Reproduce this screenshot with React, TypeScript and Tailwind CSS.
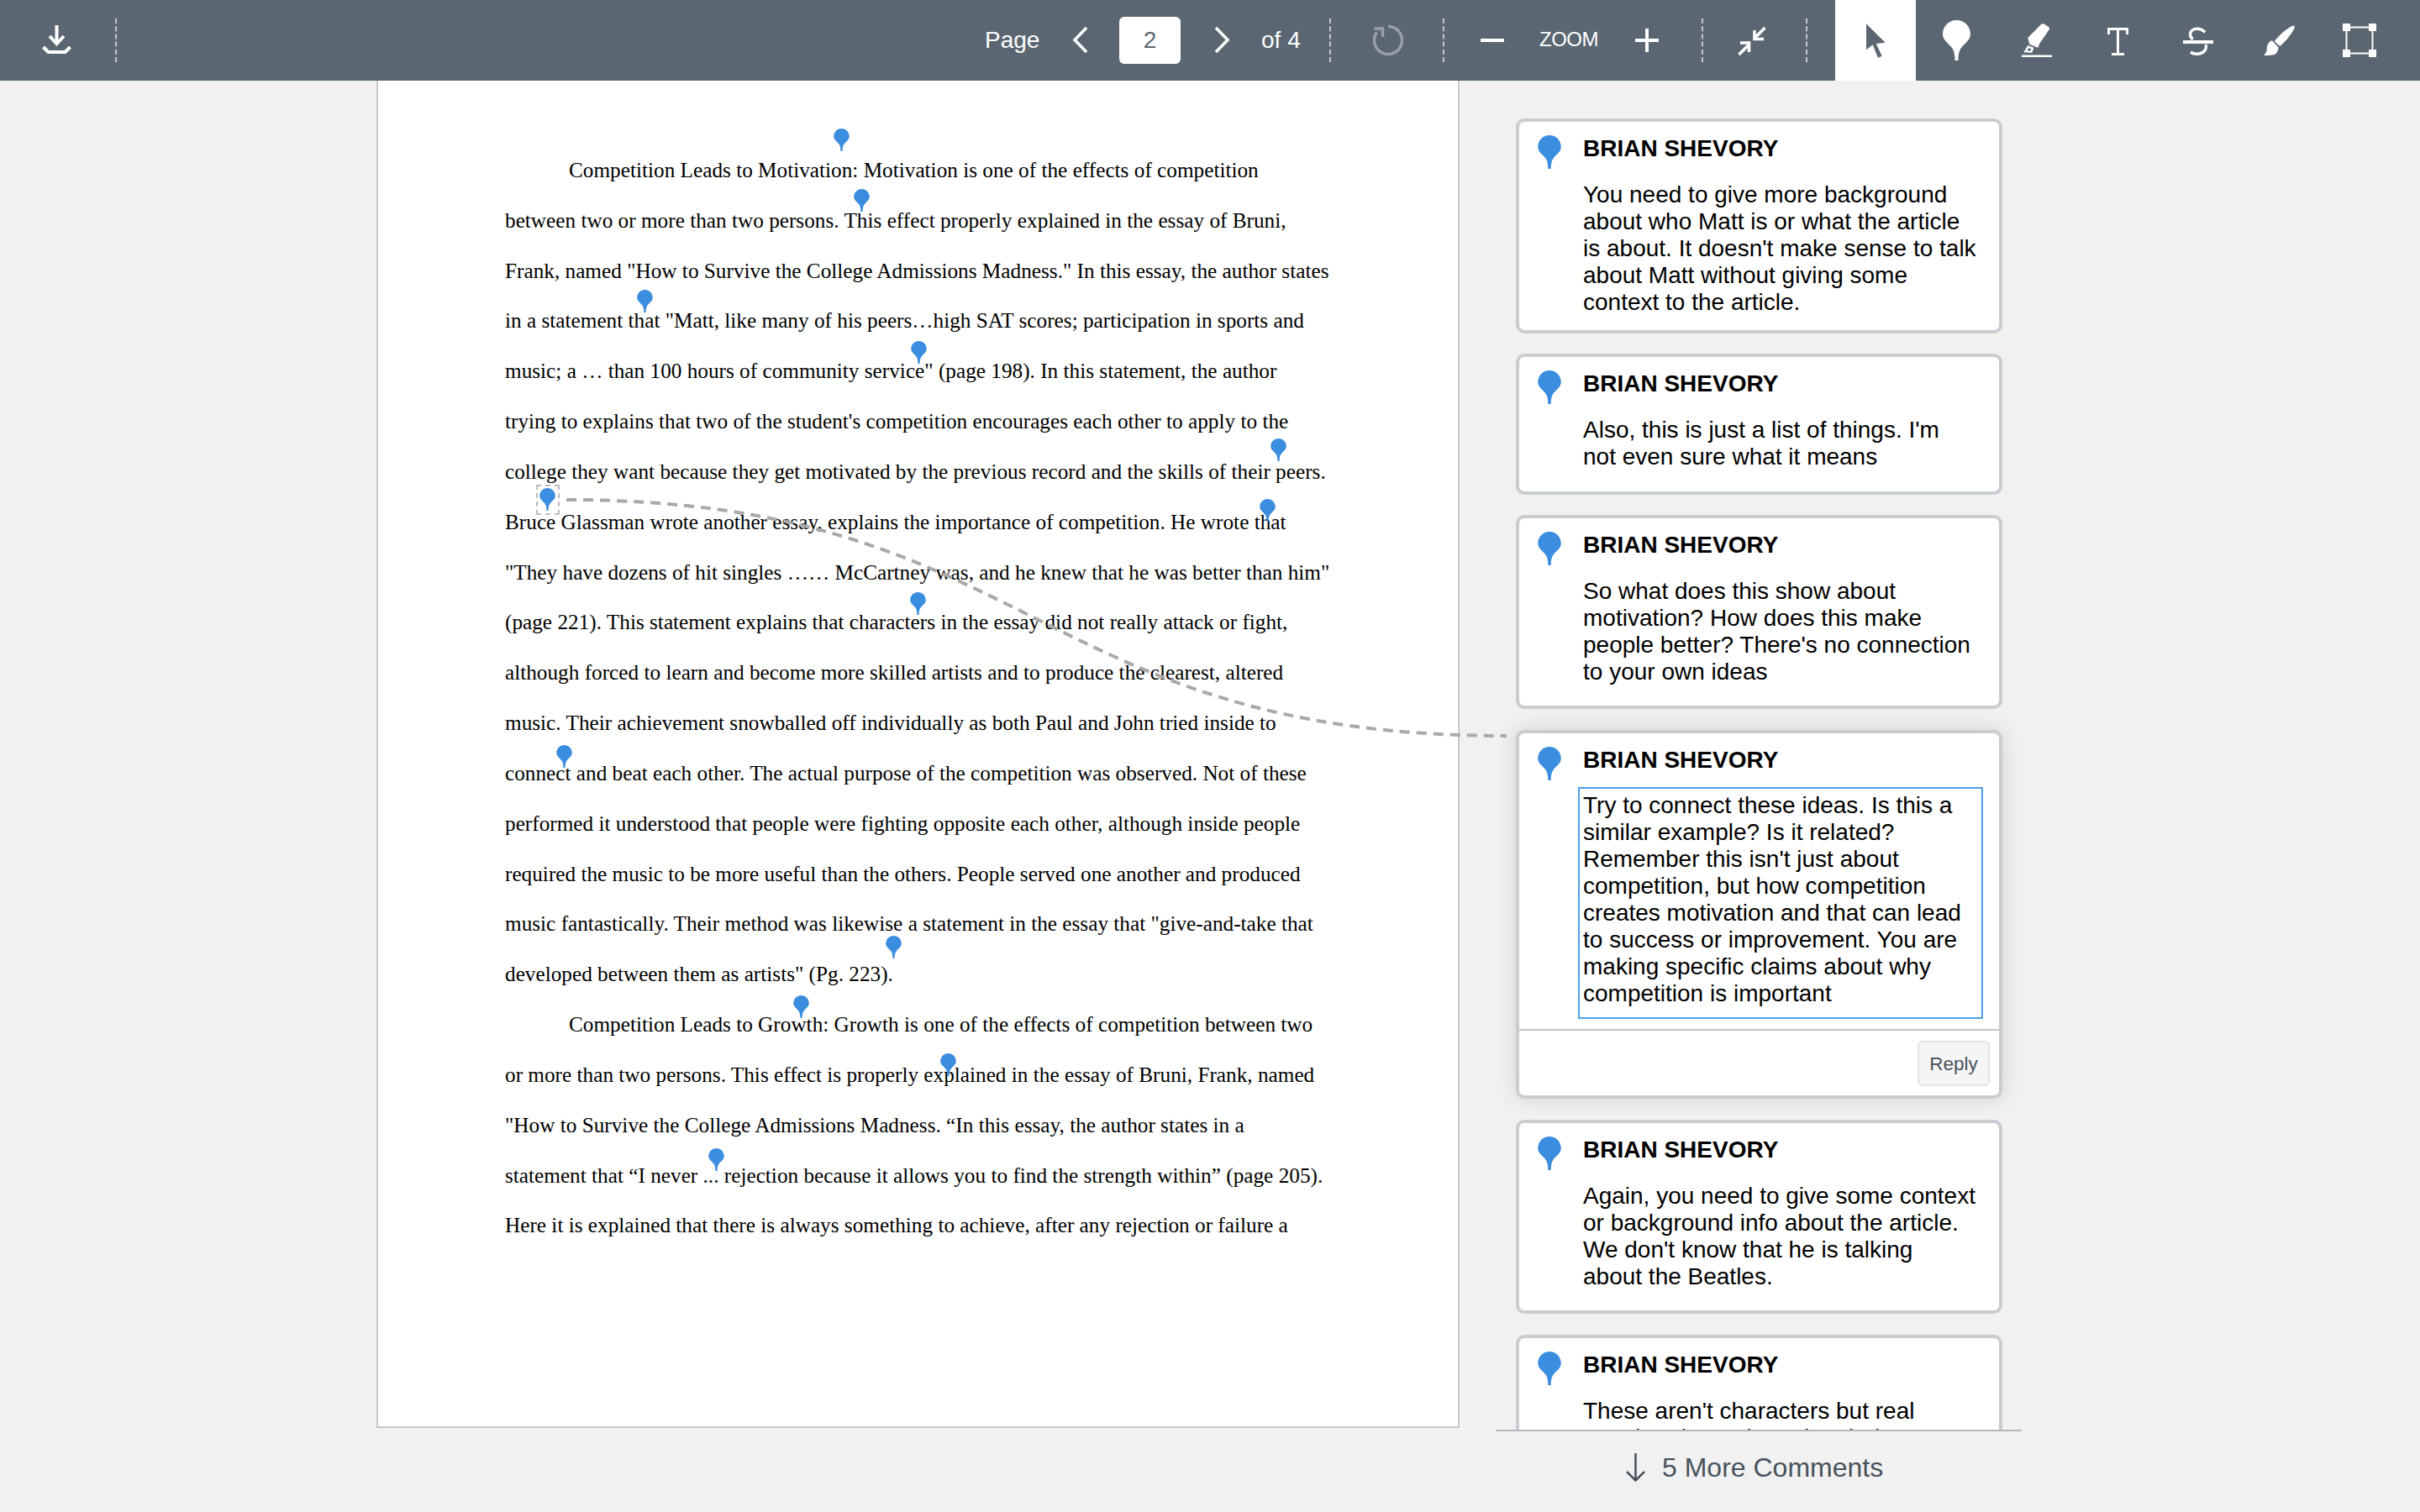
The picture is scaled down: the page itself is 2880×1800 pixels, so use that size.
const paperLines: { text: string; indent?: boolean }[] = [
  { text: 'Competition Leads to Motivation: Motivation is one of the effects of competition', indent: true },
  { text: 'between two or more than two persons. This effect properly explained in the essay of Bruni,' },
  { text: 'Frank, named "How to Survive the College Admissions Madness." In this essay, the author states' },
  { text: 'in a statement that "Matt, like many of his peers…high SAT scores; participation in sports and' },
  { text: 'music; a … than 100 hours of community service" (page 198). In this statement, the author' },
  { text: "trying to explains that two of the student's competition encourages each other to apply to the" },
  { text: 'college they want because they get motivated by the previous record and the skills of their peers.' },
  { text: 'Bruce Glassman wrote another essay, explains the importance of competition. He wrote that' },
  { text: '"They have dozens of hit singles …… McCartney was, and he knew that he was better than him"' },
  { text: '(page 221). This statement explains that characters in the essay did not really attack or fight,' },
  { text: 'although forced to learn and become more skilled artists and to produce the clearest, altered' },
  { text: 'music. Their achievement snowballed off individually as both Paul and John tried inside to' },
  { text: 'connect and beat each other. The actual purpose of the competition was observed. Not of these' },
  { text: 'performed it understood that people were fighting opposite each other, although inside people' },
  { text: 'required the music to be more useful than the others. People served one another and produced' },
  { text: 'music fantastically. Their method was likewise a statement in the essay that "give-and-take that' },
  { text: 'developed between them as artists" (Pg. 223).' },
  { text: 'Competition Leads to Growth: Growth is one of the effects of competition between two', indent: true },
  { text: 'or more than two persons. This effect is properly explained in the essay of Bruni, Frank, named' },
  { text: '"How to Survive the College Admissions Madness. “In this essay, the author states in a' },
  { text: 'statement that “I never ... rejection because it allows you to find the strength within” (page 205).' },
  { text: 'Here it is explained that there is always something to achieve, after any rejection or failure a' },
];

const pinSpots = [
  'left-[542px] top-[57px]',
  'left-[566px] top-[129px]',
  'left-[308px] top-[249px]',
  'left-[634px] top-[310px]',
  'left-[1062px] top-[426px]',
  'left-[192px] top-[485px]',
  'left-[1049px] top-[498px]',
  'left-[633px] top-[609px]',
  'left-[212px] top-[791px]',
  'left-[604px] top-[1018px]',
  'left-[494px] top-[1089px]',
  'left-[669px] top-[1158px]',
  'left-[393px] top-[1271px]',
];

const comments = [
  {
    lines: [
      'You need to give more background',
      'about who Matt is or what the article',
      "is about. It doesn't make sense to talk",
      'about Matt without giving some',
      'context to the article.',
    ],
    pad: 'pb-[17px]',
  },
  {
    lines: ["Also, this is just a list of things. I'm", 'not even sure what it means'],
    pad: 'pb-[25px]',
  },
  {
    lines: [
      'So what does this show about',
      'motivation? How does this make',
      "people better? There's no connection",
      'to your own ideas',
    ],
    pad: 'pb-[24px]',
  },
];

const activeLines = [
  'Try to connect these ideas. Is this a',
  'similar example? Is it related?',
  "Remember this isn't just about",
  'competition, but how competition',
  'creates motivation and that can lead',
  'to success or improvement. You are',
  'making specific claims about why',
  'competition is important',
];

const afterActive = [
  'Again, you need to give some context',
  'or background info about the article.',
  "We don't know that he is talking",
  'about the Beatles.',
];

function Pin({ className }: { className: string }) {
  return (
    <svg viewBox="0 0 33 48" className={className} fill="currentColor">
      <path d="M16.5 0C25.6 0 33 7.4 33 16.5C33 24 26 27.5 22 33C19.5 36.5 18.5 41 18.5 48L14.5 48C14.5 41 13.5 36.5 11 33C7 27.5 0 24 0 16.5C0 7.4 7.4 0 16.5 0Z" />
    </svg>
  );
}

function Sep({ className }: { className: string }) {
  return <div className={`h-[52px] w-[2px] self-center border-l-2 border-dashed border-[#c3c8cd] ${className}`} />;
}

function CardHead() {
  return (
    <div className="flex h-[32px]">
      <Pin className="ml-[22px] h-[40px] w-[28px] shrink-0 text-[#3b8ddf]" />
      <div className="ml-[26px] text-[28px] font-bold leading-[32px] text-black">BRIAN SHEVORY</div>
    </div>
  );
}

function Body({ lines }: { lines: string[] }) {
  return (
    <div className="text-[28px] leading-[32px] text-black">
      {lines.map((l) => (
        <div key={l} className="whitespace-nowrap">
          {l}
        </div>
      ))}
    </div>
  );
}

function Card({ lines, pad }: { lines: string[]; pad: string }) {
  return (
    <div className={`shrink-0 rounded-[10px] border-4 border-[#c8cdd2] bg-white pt-[16px] ${pad}`}>
      <CardHead />
      <div className="ml-[76px] mt-[23px]">
        <Body lines={lines} />
      </div>
    </div>
  );
}

export default function App() {
  return (
    <div className="relative h-[1800px] w-[2880px] overflow-hidden bg-[#f1f1f1] font-['Liberation_Sans',Arial,sans-serif]">
      <header className="flex h-[96px] items-stretch bg-[#5a6672] text-white">
        <svg width="35" height="96" className="ml-[50px]" fill="none" stroke="currentColor" strokeWidth="4">
          <path d="M17.5 30V53" />
          <path d="M9 43L17.5 52L26 43" />
          <path d="M1.5 56L7.5 62H27.5L33.5 56" />
        </svg>
        <Sep className="ml-[52px]" />
        <div className="ml-[1033px] w-[65px] self-center whitespace-nowrap text-[28px] leading-[32px]">Page</div>
        <svg width="19" height="96" className="ml-[39px]" fill="none" stroke="currentColor" strokeWidth="3.5">
          <path d="M17 33L3 47.5L17 62" />
        </svg>
        <div className="ml-[37px] flex h-[56px] w-[73px] items-center justify-center self-center rounded-[6px] bg-white text-[28px] text-[#5a6672]">
          2
        </div>
        <svg width="18" height="96" className="ml-[40px]" fill="none" stroke="currentColor" strokeWidth="3.5">
          <path d="M2 33L16 47.5L2 62" />
        </svg>
        <div className="ml-[38px] w-[46px] self-center whitespace-nowrap text-[28px] leading-[32px]">of 4</div>
        <Sep className="ml-[35px]" />
        <svg width="36" height="96" className="ml-[50px]" fill="none" stroke="#98a0a7" strokeWidth="3.5">
          <path d="M18 31.5A16.5 16.5 0 1 1 4.5 38.5" />
          <path d="M1.5 34H11.5V44" />
        </svg>
        <Sep className="ml-[47px]" />
        <svg width="28" height="96" className="ml-[43px]" fill="none" stroke="currentColor" strokeWidth="4">
          <path d="M0 48H28" />
        </svg>
        <div className="ml-[42px] w-[71px] self-center whitespace-nowrap pb-[3px] text-[24px] leading-[28px] tracking-[-0.5px]">
          ZOOM
        </div>
        <svg width="28" height="96" className="ml-[43px]" fill="none" stroke="currentColor" strokeWidth="4">
          <path d="M0 48H28M14 34V62" />
        </svg>
        <Sep className="ml-[51px]" />
        <svg width="34" height="96" className="ml-[41px]" fill="none" stroke="currentColor" strokeWidth="3.5">
          <path d="M32.5 33L20 45.5" />
          <path d="M20 36V46.5H31" />
          <path d="M1.5 65L13.5 53" />
          <path d="M3 51H13.5V62" />
        </svg>
        <Sep className="ml-[47px]" />
        <div className="ml-[33px] flex w-[96px] justify-center bg-white text-[#5a6672]">
          <svg width="23" height="96" fill="currentColor">
            <path d="M0 28.3L22.7 50.7L11.7 52L18.7 66.7L14 68.7L7.7 53.3L0 59.3Z" />
          </svg>
        </div>
        <Pin className="ml-[32px] mt-[24px] h-[48px] w-[33px]" />
        <svg width="36" height="96" className="ml-[61px]" fill="currentColor">
          <path d="M23.3 28.7C24.5 28 25.5 28 26.5 28.5L31.7 31.8C33 32.7 33.2 34 32.7 35.2L21.5 51.5L19.3 56.7L9.3 52.7L7.3 45Z" />
          <path
            fillRule="evenodd"
            d="M7.3 54L14.5 56.7L12.3 62.7L2.3 62.2ZM8.3 57.2L6 60.2L10.6 60.4L11.3 58.3Z"
          />
          <rect x="0" y="65.5" width="36" height="2.5" />
        </svg>
        <svg width="25" height="96" className="ml-[66px]" fill="none" stroke="currentColor" strokeWidth="3">
          <path d="M1.5 41V34.5H23.5V41" />
          <path d="M12.5 34.5V65" />
          <path d="M5 64.5H20" />
        </svg>
        <svg width="36" height="96" className="ml-[65px]" fill="none" stroke="currentColor" strokeWidth="3.5">
          <path d="M26 38.5C23 35 20 34.3 17 34.3C12 34.3 8.5 37 8.5 41C8.5 43.5 10 45.5 11.5 47" />
          <path d="M27 53C28 56 27 60 24 62C20 65 13 65 9 62" />
          <path d="M0 50H36" strokeWidth="4" />
        </svg>
        <svg width="37" height="96" className="ml-[60px]" fill="currentColor">
          <path d="M34.3 30.7C35.8 30 37.2 31.5 36.7 33.3C33 41 26 49.5 19.3 55L12.7 49.3C19 41 27 34 34.3 30.7Z" />
          <path d="M10 48.3L17.7 56.7C17 61 15 64 12.7 65C8 66.2 4 66 0 66C3 63.5 3.5 61 3.7 58C4 53 6 49.5 10 48.3Z" />
        </svg>
        <svg width="40" height="96" className="ml-[57px]" fill="currentColor">
          <path d="M4.5 32.5V63.5M4.5 32.5H35.5M35.5 32.5V63.5M4.5 63.5H35.5" fill="none" stroke="currentColor" strokeWidth="2" />
          <rect x="0" y="28" width="9" height="9" />
          <rect x="31" y="28" width="9" height="9" />
          <rect x="0" y="59" width="9" height="9" />
          <rect x="31" y="59" width="9" height="9" />
        </svg>
      </header>

      <main className="flex items-start pl-[448px]">
        <section className="relative h-[1604px] w-[1289px] border-x-2 border-b-2 border-[#c5c9ce] bg-white pl-[151px] pt-[77px] font-['Liberation_Serif','Times_New_Roman',serif] text-[25.25px] leading-[59.83px] text-black">
          {paperLines.map((line) => (
            <div key={line.text} className={line.indent ? 'whitespace-nowrap pl-[76px]' : 'whitespace-nowrap'}>
              {line.text}
            </div>
          ))}
          {pinSpots.map((spot) => (
            <Pin key={spot} className={`absolute h-[27px] w-[19px] text-[#3b8ddf] ${spot}`} />
          ))}
          <div className="absolute left-[188px] top-[481px] h-[36px] w-[28px] border-2 border-dashed border-[#bdbdbd]" />
        </section>

        <aside className="ml-[43px] w-[626px]">
          <div className="flex h-[1608px] flex-col gap-[24px] overflow-hidden border-b-2 border-[#b5b9bd] pl-[24px] pr-[23px] pt-[45px]">
            <Card {...comments[0]} />
            <Card {...comments[1]} />
            <Card {...comments[2]} />
            <div className="mt-px shrink-0 rounded-[10px] border-4 border-[#c8cdd2] bg-white pt-[16px] shadow-[0_0_26px_rgba(0,0,0,0.13)]">
              <CardHead />
              <div className="ml-[70px] mr-[19px] mt-[16px] border-2 border-[#4f9fe6] pb-[12px] pl-[4px] pt-[4px]">
                <Body lines={activeLines} />
              </div>
              <div className="mt-[12px] border-t-2 border-[#c0c5ca] pb-[11px] pr-[11px] pt-[12px]">
                <div className="ml-auto flex h-[54px] w-[86px] items-center justify-center rounded-[6px] border-2 border-[#e3e3e3] bg-[#f5f5f5] pt-[2px] text-[22.5px] text-[#47525d]">
                  Reply
                </div>
              </div>
            </div>
            <div className="mt-px shrink-0">
              <Card lines={afterActive} pad="pb-[24px]" />
            </div>
            <div className="mt-px shrink-0">
              <Card lines={["These aren't characters but real", 'people. Always keep in mind']} pad="pb-[24px]" />
            </div>
          </div>
          <div className="flex h-[88px] items-center pb-[2px] pl-[155px] text-[32px] text-[#47525d]">
            <svg width="23" height="34" fill="none" stroke="currentColor" strokeWidth="2.5">
              <path d="M11.5 0V32M1 22L11.5 32.5L22 22" />
            </svg>
            <span className="ml-[20px] whitespace-nowrap">5 More Comments</span>
          </div>
        </aside>
      </main>

      <svg className="pointer-events-none absolute left-0 top-0 h-[1800px] w-[2880px]" fill="none">
        <path d="M674 595C1230 595 1230 876 1793 876" stroke="#a9a9a9" strokeWidth="4" strokeDasharray="12 8" />
      </svg>
    </div>
  );
}
